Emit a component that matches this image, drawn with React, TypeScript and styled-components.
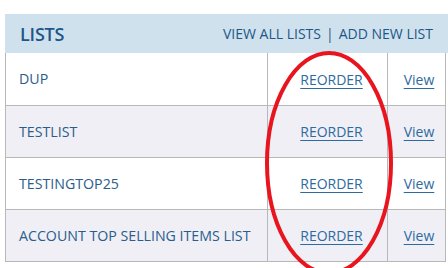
import React, { FC } from "react";
import styled, { createGlobalStyle } from "styled-components";

const GlobalStyle = createGlobalStyle`
  html, body {
    margin: 0;
    padding: 0;
    background: #ffffff;
    overflow: hidden;
  }
  body {
    font-family: "Open Sans", "Liberation Sans", sans-serif;
  }
`;

const Page = styled.div`
  position: relative;
  width: 448px;
  height: 268px;
  padding: 14px 0 0 5px;
  box-sizing: border-box;
`;

const PanelHeader = styled.div`
  display: flex;
  align-items: center;
  justify-content: space-between;
  height: 39px;
  width: 445px;
  box-sizing: border-box;
  padding: 0 17px 0 15px;
  background: #cfe1ed;
  color: #1b5788;
`;

const Title = styled.h2`
  margin: 0;
  font-size: 18px;
  font-weight: 600;
  letter-spacing: -0.2px;
`;

const HeaderLinks = styled.div`
  font-size: 14px;
`;

const HeaderLink = styled.a`
  color: inherit;
  text-decoration: none;
`;

const Separator = styled.span`
  margin: 0 5px;
`;

const Table = styled.table`
  width: 441px;
  border-collapse: collapse;
  table-layout: fixed;
  border-left: 1px solid #b8b8b8;
  border-right: 1px solid #b8b8b8;
`;

const Row = styled.tr<{ $striped: boolean }>`
  height: 52px;
  background: ${({ $striped }) => ($striped ? "#efeff5" : "#ffffff")};
  border-bottom: 1px solid #b8b8b8;
`;

const NameCell = styled.td`
  padding: 0 0 0 13px;
  font-size: 14.2px;
  color: #2a5d8c;
  white-space: nowrap;
`;

const ActionCell = styled.td<{ $inset: number }>`
  padding: 0 0 0 ${({ $inset }) => $inset}px;
  text-align: center;
  border-left: 1px solid #b8b8b8;
`;

const Link = styled.a`
  font-size: 14px;
  color: #2d6aa0;
  text-decoration: underline;
  text-underline-offset: 3px;
`;

const Annotation = styled.svg`
  position: absolute;
  left: 0;
  top: 0;
  pointer-events: none;
`;

const lists = ["DUP", "TESTLIST", "TESTINGTOP25", "ACCOUNT TOP SELLING ITEMS LIST"];

const App: FC = () => (
  <Page>
    <GlobalStyle />
    <PanelHeader>
      <Title>LISTS</Title>
      <HeaderLinks>
        <HeaderLink href="#">VIEW ALL LISTS</HeaderLink>
        <Separator>|</Separator>
        <HeaderLink href="#">ADD NEW LIST</HeaderLink>
      </HeaderLinks>
    </PanelHeader>
    <Table>
      <colgroup>
        <col />
        <col style={{ width: 120 }} />
        <col style={{ width: 58 }} />
      </colgroup>
      <tbody>
        {lists.map((name, i) => (
          <Row key={name} $striped={i % 2 === 1}>
            <NameCell>{name}</NameCell>
            <ActionCell $inset={8}>
              <Link href="#">REORDER</Link>
            </ActionCell>
            <ActionCell $inset={5}>
              <Link href="#">View</Link>
            </ActionCell>
          </Row>
        ))}
      </tbody>
    </Table>
    <Annotation width="448" height="268" viewBox="0 0 448 268">
      <ellipse cx="329" cy="163" rx="62" ry="110" fill="none" stroke="#e8141e" strokeWidth="4" />
    </Annotation>
  </Page>
);

export default App;
